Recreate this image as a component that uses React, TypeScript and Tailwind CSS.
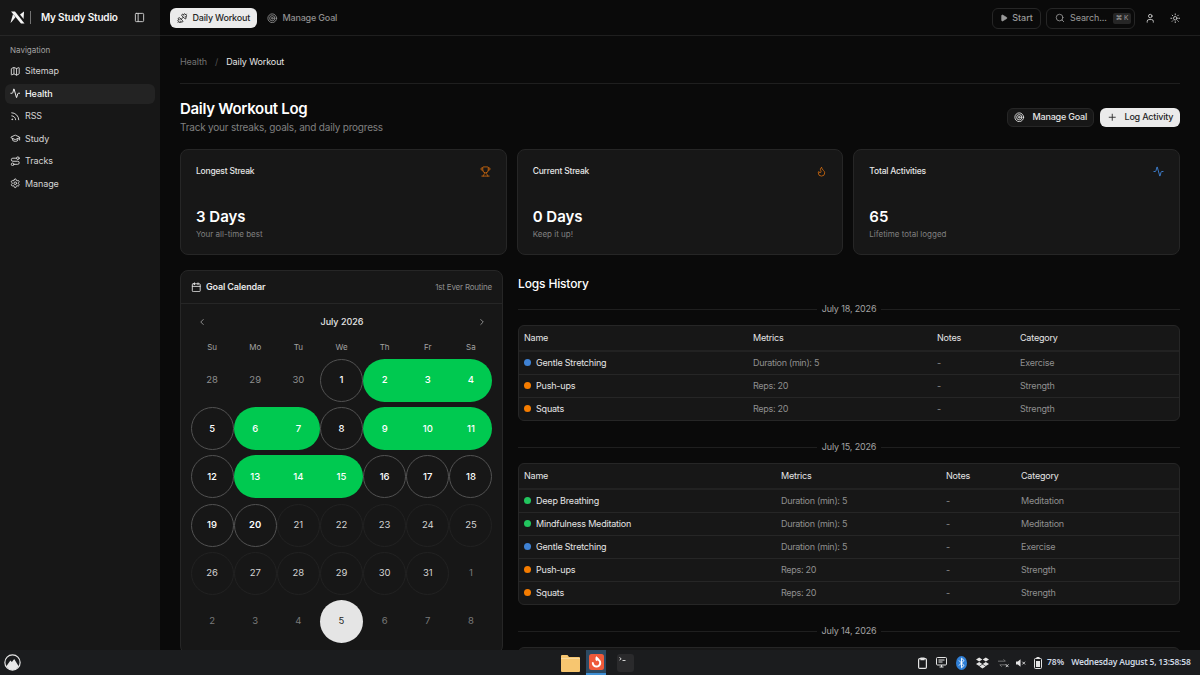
import {
  Activity, Calendar, ChevronLeft, ChevronRight, Dumbbell, Flame, GraduationCap,
  Map as MapIcon, PanelLeft, Play, Plus, Route, Rss, Search, Settings, Sun, Target,
  Trophy, User, type LucideIcon,
} from 'lucide-react';

const NAV: { label: string; icon: LucideIcon; active?: boolean }[] = [
  { label: 'Sitemap', icon: MapIcon },
  { label: 'Health', icon: Activity, active: true },
  { label: 'RSS', icon: Rss },
  { label: 'Study', icon: GraduationCap },
  { label: 'Tracks', icon: Route },
  { label: 'Manage', icon: Settings },
];

const STATS = [
  { title: 'Longest Streak', value: '3 Days', note: 'Your all-time best', icon: Trophy, color: 'text-[#c2640f]' },
  { title: 'Current Streak', value: '0 Days', note: 'Keep it up!', icon: Flame, color: 'text-[#c2640f]' },
  { title: 'Total Activities', value: '65', note: 'Lifetime total logged', icon: Activity, color: 'text-[#3f82d4]' },
];

type CellKind = 'done' | 'ring' | 'plain' | 'out' | 'today' | 'muted';
type Cell = { n: number; kind: CellKind; bold?: boolean };

const cells: Cell[] = [
  ...[28, 29, 30].map((n) => ({ n, kind: 'muted' as CellKind })),
  { n: 1, kind: 'ring' },
  ...[2, 3, 4].map((n) => ({ n, kind: 'done' as CellKind })),
  { n: 5, kind: 'ring' },
  ...[6, 7].map((n) => ({ n, kind: 'done' as CellKind })),
  { n: 8, kind: 'ring' },
  ...[9, 10, 11].map((n) => ({ n, kind: 'done' as CellKind })),
  { n: 12, kind: 'ring' },
  ...[13, 14, 15].map((n) => ({ n, kind: 'done' as CellKind })),
  ...[16, 17, 18, 19].map((n) => ({ n, kind: 'ring' as CellKind })),
  { n: 20, kind: 'ring', bold: true },
  ...[21, 22, 23, 24, 25, 26, 27, 28, 29, 30, 31].map((n) => ({ n, kind: 'plain' as CellKind })),
  { n: 1, kind: 'out' },
  ...[2, 3, 4].map((n) => ({ n, kind: 'out' as CellKind })),
  { n: 5, kind: 'today' },
  ...[6, 7, 8].map((n) => ({ n, kind: 'out' as CellKind })),
];

const DOT: Record<string, string> = {
  Exercise: 'bg-[#3f82d4]',
  Strength: 'bg-[#f57c00]',
  Meditation: 'bg-[#22c55e]',
};

const STRETCH = { name: 'Gentle Stretching', metric: 'Duration (min): 5', category: 'Exercise' };
const PUSH = { name: 'Push-ups', metric: 'Reps: 20', category: 'Strength' };
const SQUAT = { name: 'Squats', metric: 'Reps: 20', category: 'Strength' };

function CalendarCell({ cell, index }: { cell: Cell; index: number }) {
  const prev = cells[index - 1];
  const next = cells[index + 1];
  if (cell.kind === 'done') {
    const joinLeft = index % 7 !== 0 && prev?.kind === 'done';
    const joinRight = index % 7 !== 6 && next?.kind === 'done';
    return (
      <div
        className={`flex h-[43px] items-center justify-center bg-[#00c950] text-[9.5px] font-medium text-white ${
          joinLeft ? '' : 'rounded-l-full'
        } ${joinRight ? '' : 'rounded-r-full'}`}
      >
        {cell.n}
      </div>
    );
  }
  const look: Record<string, string> = {
    ring: 'border border-[#525252] font-medium text-white',
    plain: 'border border-[#222222] text-[#d4d4d4]',
    muted: 'text-[#8f8f8f]',
    out: 'text-[#7a7a7a]',
    today: 'bg-[#e5e5e5] text-[#262626]',
  };
  return (
    <div
      className={`flex h-[43px] items-center justify-center rounded-full text-[9.5px] ${look[cell.kind]} ${
        cell.bold ? 'border-[#6e6e6e] font-semibold' : ''
      }`}
    >
      {cell.n}
    </div>
  );
}

function LogTable({
  rows,
  cols,
}: {
  rows: { name: string; metric: string; category: string }[];
  cols: [string, string, string];
}) {
  return (
    <div className="overflow-hidden rounded-md border border-[#262626] bg-[#171717]">
      <table className="w-full table-fixed text-left text-[9px] tracking-[-0.2px]">
        <thead>
          <tr className="h-[25px] border-b-2 border-[#222222] text-[#e5e5e5]">
            <th className={`pl-[5px] font-normal ${cols[0]}`}>Name</th>
            <th className={`font-normal ${cols[1]}`}>Metrics</th>
            <th className={`font-normal ${cols[2]}`}>Notes</th>
            <th className="font-normal">Category</th>
          </tr>
        </thead>
        <tbody>
          {rows.map((row, i) => (
            <tr key={row.name} className={`h-[23px] ${i < rows.length - 1 ? 'border-b border-[#262626]' : ''}`}>
              <td className="pl-[5px] text-[#e5e5e5]">
                <span className="flex items-center gap-[5px]">
                  <span className={`h-[7px] w-[7px] rounded-full ${DOT[row.category]}`} />
                  {row.name}
                </span>
              </td>
              <td className="tracking-[-0.3px] text-[#8f8f8f]">{row.metric}</td>
              <td className="text-[#8f8f8f]">-</td>
              <td className="text-[#8f8f8f]">{row.category}</td>
            </tr>
          ))}
        </tbody>
      </table>
    </div>
  );
}

function DateDivider({ label }: { label: string }) {
  return (
    <div className="flex h-[12px] items-center gap-[5px] text-[9px] tracking-[-0.15px] text-[#a3a3a3]">
      <div className="h-px flex-1 bg-[#1f1f1f]" />
      {label}
      <div className="h-px flex-1 bg-[#1f1f1f]" />
    </div>
  );
}

function Taskbar() {
  return (
    <div className="flex h-[25px] shrink-0 items-center bg-[#1b1c1e]">
      <div className="w-[561px] pl-[4px]">
        <svg width="17" height="17" viewBox="0 0 16 16" className="block">
          <circle cx="8" cy="8" r="7.2" fill="#1b1c1e" stroke="#e8e8e8" strokeWidth="1.1" />
          <path d="M2.2 11.5 6 6l1.4 1.6L9.6 4.6l4.2 6.9A7 7 0 0 1 8 15a7 7 0 0 1-5.8-3.5Z" fill="#e8e8e8" />
        </svg>
      </div>
      <div className="flex h-full w-[329px] items-center">
        <svg width="19" height="18" viewBox="0 0 19 18">
          <path d="M0 2A1 1 0 0 1 1 1h5.5L8 3h10a1 1 0 0 1 1 1v13a1 1 0 0 1-1 1H1a1 1 0 0 1-1-1Z" fill="#f7c670" />
          <path d="M0 4.5h19" stroke="#fbe0ae" strokeWidth="0.7" />
        </svg>
        <div className="ml-[6px] flex h-full w-[20px] items-center justify-center border-b-2 border-[#3f8fd4] bg-[#2c4a63]">
          <svg width="15" height="16" viewBox="0 0 15 16">
            <rect width="15" height="16" rx="2.5" fill="#ee5a3a" />
            <path d="M7.5 3.3v1.9a3.7 3.7 0 1 1-3.6 3" fill="none" stroke="#fff" strokeWidth="2" />
            <path d="m7 2 3 2.8-3 2.4Z" fill="#fff" />
          </svg>
        </div>
        <svg width="17" height="18" viewBox="0 0 17 18" className="ml-[11px]">
          <rect width="17" height="18" rx="3" fill="#2a2a2c" />
          <path d="M2.5 3.5 4.2 4.8 2.5 6.1M5.5 6.5h3" fill="none" stroke="#e5e5e5" strokeWidth="0.9" />
        </svg>
      </div>
      <div className="flex flex-1 items-center text-[#e4e4e4]">
        <svg width="9" height="12" viewBox="0 0 9 12" className="ml-[28px]" fill="none" stroke="currentColor" strokeWidth="1.2">
          <rect x="0.6" y="1.6" width="7.8" height="9.8" rx="1.2" />
          <path d="M3 1.2h3v1.4H3Z" fill="currentColor" />
        </svg>
        <svg width="11" height="11" viewBox="0 0 11 11" className="ml-[9px]" fill="none" stroke="currentColor" strokeWidth="1">
          <rect x="0.5" y="0.5" width="10" height="7.5" rx="1" />
          <path d="M2.5 3h6M2.5 5h4M3.5 10h4M5.5 8v2" />
        </svg>
        <svg width="11" height="14" viewBox="0 0 11 14" className="ml-[9px]">
          <ellipse cx="5.5" cy="7" rx="5.5" ry="7" fill="#2f7fd6" />
          <path d="m3 4.5 5 5-2.5 2.3V2.2L8 4.5l-5 5" fill="none" stroke="#fff" strokeWidth="0.9" />
        </svg>
        <svg width="13" height="12" viewBox="0 0 13 12" className="ml-[9px]" fill="currentColor">
          <path d="M3.2.5 6.3 2.5 3.2 4.5 0 2.5ZM9.8.5 13 2.5 9.8 4.5 6.7 2.5ZM3.2 4.9l3.1 2-3.1 2-3.2-2ZM9.8 4.9l3.2 2-3.2 2-3.1-2ZM6.5 7.5l3.1 2-3.1 2-3.1-2Z" />
        </svg>
        <svg width="11" height="10" viewBox="0 0 12 10" className="ml-[9px]" fill="none" stroke="#7a7a7a" strokeWidth="1">
          <path d="M0 3h8l-2-2M10 7H2l2 2" />
          <path d="m8.5 6.5 3 3m0-3-3 3" stroke="#d4d4d4" />
        </svg>
        <svg width="10" height="10" viewBox="0 0 11 10" className="ml-[7px]" fill="currentColor">
          <path d="M0 3.3h2L5 .8v8.4L2 6.7H0Z" />
          <path d="m7 3.6 3 3m0-3-3 3" stroke="currentColor" fill="none" />
        </svg>
        <svg width="8" height="12" viewBox="0 0 8 12" className="ml-[8px]" fill="none" stroke="currentColor" strokeWidth="1">
          <rect x="0.5" y="1.5" width="7" height="10" rx="1" />
          <path d="M2.5.5h3" />
          <rect x="2" y="4" width="4" height="6" fill="currentColor" stroke="none" />
        </svg>
        <span className="ml-[5px] font-['Noto_Sans','Open_Sans',sans-serif] text-[8.5px] font-semibold text-[#cfd8e3]">78%</span>
        <span className="ml-[7px] whitespace-nowrap font-['Noto_Sans','Open_Sans',sans-serif] text-[8.5px] font-semibold tracking-[-0.2px] text-[#cfd8e3]">
          Wednesday August 5, 13:58:58
        </span>
      </div>
    </div>
  );
}

export default function App() {
  return (
    <div className="flex h-[675px] w-[1200px] flex-col overflow-hidden bg-[#0a0a0a] font-['Inter',sans-serif] text-white">
      <div className="flex min-h-0 flex-1">
        {/* Sidebar */}
        <aside className="flex w-[160px] shrink-0 flex-col bg-[#171717]">
          <div className="flex h-[36px] shrink-0 items-center border-b border-[#262626] pl-[10px]">
            <svg width="15" height="13" viewBox="0 0 15 13" fill="#f5f5f5">
              <path d="M1 .5h4L14.5 12.5H11Z" />
              <path d="M.5 12 3 3l2.4 3.2L2 10.5Z" />
              <path d="M14 .5 13.6 8 10 3.6Z" />
            </svg>
            <div className="ml-[5px] h-[13px] w-px bg-[#737373]" />
            <span className="ml-[10px] text-[10px] font-semibold tracking-[-0.2px] text-[#f5f5f5]">My Study Studio</span>
            <PanelLeft size={11} className="ml-[16px] text-[#d4d4d4]" />
          </div>
          <div className="px-[5px]">
            <p className="mb-[5px] mt-[8px] pl-[5px] text-[8px] leading-[12px] text-[#a3a3a3]">Navigation</p>
            <nav className="flex flex-col gap-[2.5px]">
              {NAV.map(({ label, icon: Icon, active }) => (
                <div
                  key={label}
                  className={`flex h-[20px] items-center gap-[4.5px] rounded-md pl-[5px] text-[9px] tracking-[-0.1px] ${
                    active ? 'bg-[#232323] font-medium text-[#f5f5f5]' : 'text-[#d4d4d4]'
                  }`}
                >
                  <Icon size={10.5} strokeWidth={2.2} />
                  {label}
                </div>
              ))}
            </nav>
          </div>
        </aside>

        <div className="flex min-w-0 flex-1 flex-col">
          {/* Top bar */}
          <header className="flex h-[36px] shrink-0 items-center border-b border-[#1f1f1f] px-[10px] pt-[1px]">
            <div className="flex h-[20px] items-center gap-[5px] rounded-md bg-[#ebebeb] px-[7px] text-[9px] font-medium tracking-[-0.2px] text-[#262626]">
              <Dumbbell size={10.5} strokeWidth={2.2} />
              Daily Workout
            </div>
            <div className="ml-[3px] flex h-[20px] items-center gap-[5px] px-[7px] text-[9px] font-medium tracking-[-0.2px] text-[#8f8f8f]">
              <Target size={10.5} />
              Manage Goal
            </div>
            <div className="ml-auto flex items-center">
              <div className="flex h-[21px] w-[49px] items-center justify-center gap-[4px] rounded-md border border-[#262626] text-[9px] font-medium text-[#9a9a9a]">
                <Play size={8} fill="currentColor" />
                Start
              </div>
              <div className="ml-[5px] flex h-[21px] w-[89px] items-center gap-[5px] rounded-md border border-[#262626] pl-[8px] text-[9px] tracking-[-0.1px] text-[#9a9a9a]">
                <Search size={10} />
                Search...
                <span className="ml-[1px] rounded-[2px] bg-[#262626] px-[3px] py-[1px] text-[6.5px] leading-[9px] text-[#a3a3a3]">⌘ K</span>
              </div>
              <User size={10.5} className="ml-[10px] text-[#d4d4d4]" />
              <Sun size={10.5} className="ml-[14px] mr-[10px] text-[#d4d4d4]" />
            </div>
          </header>

          {/* Content */}
          <main className="min-h-0 flex-1 overflow-hidden px-[20px]">
            <div className="flex h-[48px] items-center gap-[7px] border-b border-[#1f1f1f] pt-[4px] text-[9px] tracking-[-0.1px]">
              <span className="text-[#737373]">Health</span>
              <span className="mx-[1px] text-[#525252]">/</span>
              <span className="text-[#e5e5e5]">Daily Workout</span>
            </div>

            <div className="mt-[15px] flex items-center justify-between">
              <div>
                <h1 className="text-[15px] font-semibold leading-[20px] tracking-[-0.3px]">Daily Workout Log</h1>
                <p className="text-[10px] leading-[16px] tracking-[-0.2px] text-[#808080]">Track your streaks, goals, and daily progress</p>
              </div>
              <div className="flex items-center gap-[6px]">
                <div className="flex h-[19px] w-[87px] items-center gap-[8px] rounded-md border border-[#262626] bg-[#171717] pl-[6px] text-[9px] font-medium tracking-[-0.2px] text-[#e5e5e5]">
                  <Target size={10.5} />
                  Manage Goal
                </div>
                <div className="flex h-[19px] w-[80px] items-center gap-[7px] rounded-md bg-[#ebebeb] pl-[7px] text-[9px] font-medium tracking-[-0.2px] text-[#262626]">
                  <Plus size={10.5} />
                  Log Activity
                </div>
              </div>
            </div>

            <div className="mt-[14px] grid grid-cols-3 gap-[10px]">
              {STATS.map(({ title, value, note, icon: Icon, color }) => (
                <div key={title} className="h-[106px] rounded-lg border border-[#262626] bg-[#171717] px-[15px] pt-[15px]">
                  <div className="flex items-center justify-between">
                    <span className="text-[8.5px] font-medium leading-[12px] tracking-[-0.2px] text-[#e5e5e5]">{title}</span>
                    <Icon size={11} className={color} />
                  </div>
                  <div className="mt-[30px] text-[15px] font-semibold leading-[20px]">{value}</div>
                  <div className="mt-[1px] text-[8px] leading-[12px] text-[#808080]">{note}</div>
                </div>
              ))}
            </div>

            <div className="mt-[15px] flex items-start gap-[15px]">
              {/* Calendar */}
              <section className="w-[323px] shrink-0 rounded-lg border border-[#262626] bg-[#171717]">
                <div className="flex h-[33px] items-center border-b border-[#262626] px-[10px]">
                  <Calendar size={10.5} className="text-[#e5e5e5]" />
                  <span className="ml-[4.5px] text-[9px] font-semibold tracking-[-0.15px] text-[#e5e5e5]">Goal Calendar</span>
                  <span className="ml-auto text-[8px] tracking-[-0.2px] text-[#8f8f8f]">1st Ever Routine</span>
                </div>
                <div className="px-[9.5px] pb-[10px]">
                  <div className="flex h-[36px] items-center justify-between pl-[6px] pr-[5px]">
                    <ChevronLeft size={10} className="text-[#a3a3a3]" />
                    <span className="text-[9px] font-medium text-[#e5e5e5]">July 2026</span>
                    <ChevronRight size={10} className="text-[#a3a3a3]" />
                  </div>
                  <div className="grid h-[13px] grid-cols-7 items-center text-center text-[8px] text-[#a3a3a3]">
                    {['Su', 'Mo', 'Tu', 'We', 'Th', 'Fr', 'Sa'].map((d) => (
                      <span key={d}>{d}</span>
                    ))}
                  </div>
                  <div className="mt-[6px] grid grid-cols-7 gap-y-[5.2px]">
                    {cells.map((cell, i) => (
                      <CalendarCell key={i} cell={cell} index={i} />
                    ))}
                  </div>
                </div>
              </section>

              {/* Logs */}
              <section className="min-w-0 flex-1">
                <h2 className="text-[12px] font-medium leading-[28px] tracking-[-0.15px]">Logs History</h2>
                <div className="mt-[5px]">
                  <DateDivider label="July 18, 2026" />
                </div>
                <div className="mt-[10px]">
                  <LogTable rows={[STRETCH, PUSH, SQUAT]} cols={['w-[234px]', 'w-[184px]', 'w-[83px]']} />
                </div>
                <div className="mt-[20px]">
                  <DateDivider label="July 15, 2026" />
                </div>
                <div className="mt-[10px]">
                  <LogTable
                    rows={[
                      { name: 'Deep Breathing', metric: 'Duration (min): 5', category: 'Meditation' },
                      { name: 'Mindfulness Meditation', metric: 'Duration (min): 5', category: 'Meditation' },
                      STRETCH,
                      PUSH,
                      SQUAT,
                    ]}
                    cols={['w-[262px]', 'w-[165px]', 'w-[75px]']}
                  />
                </div>
                <div className="mt-[20px]">
                  <DateDivider label="July 14, 2026" />
                </div>
                <div className="mt-[10px] h-[30px] rounded-md border border-[#262626] bg-[#171717]" />
              </section>
            </div>
          </main>
        </div>
      </div>
      <Taskbar />
    </div>
  );
}
